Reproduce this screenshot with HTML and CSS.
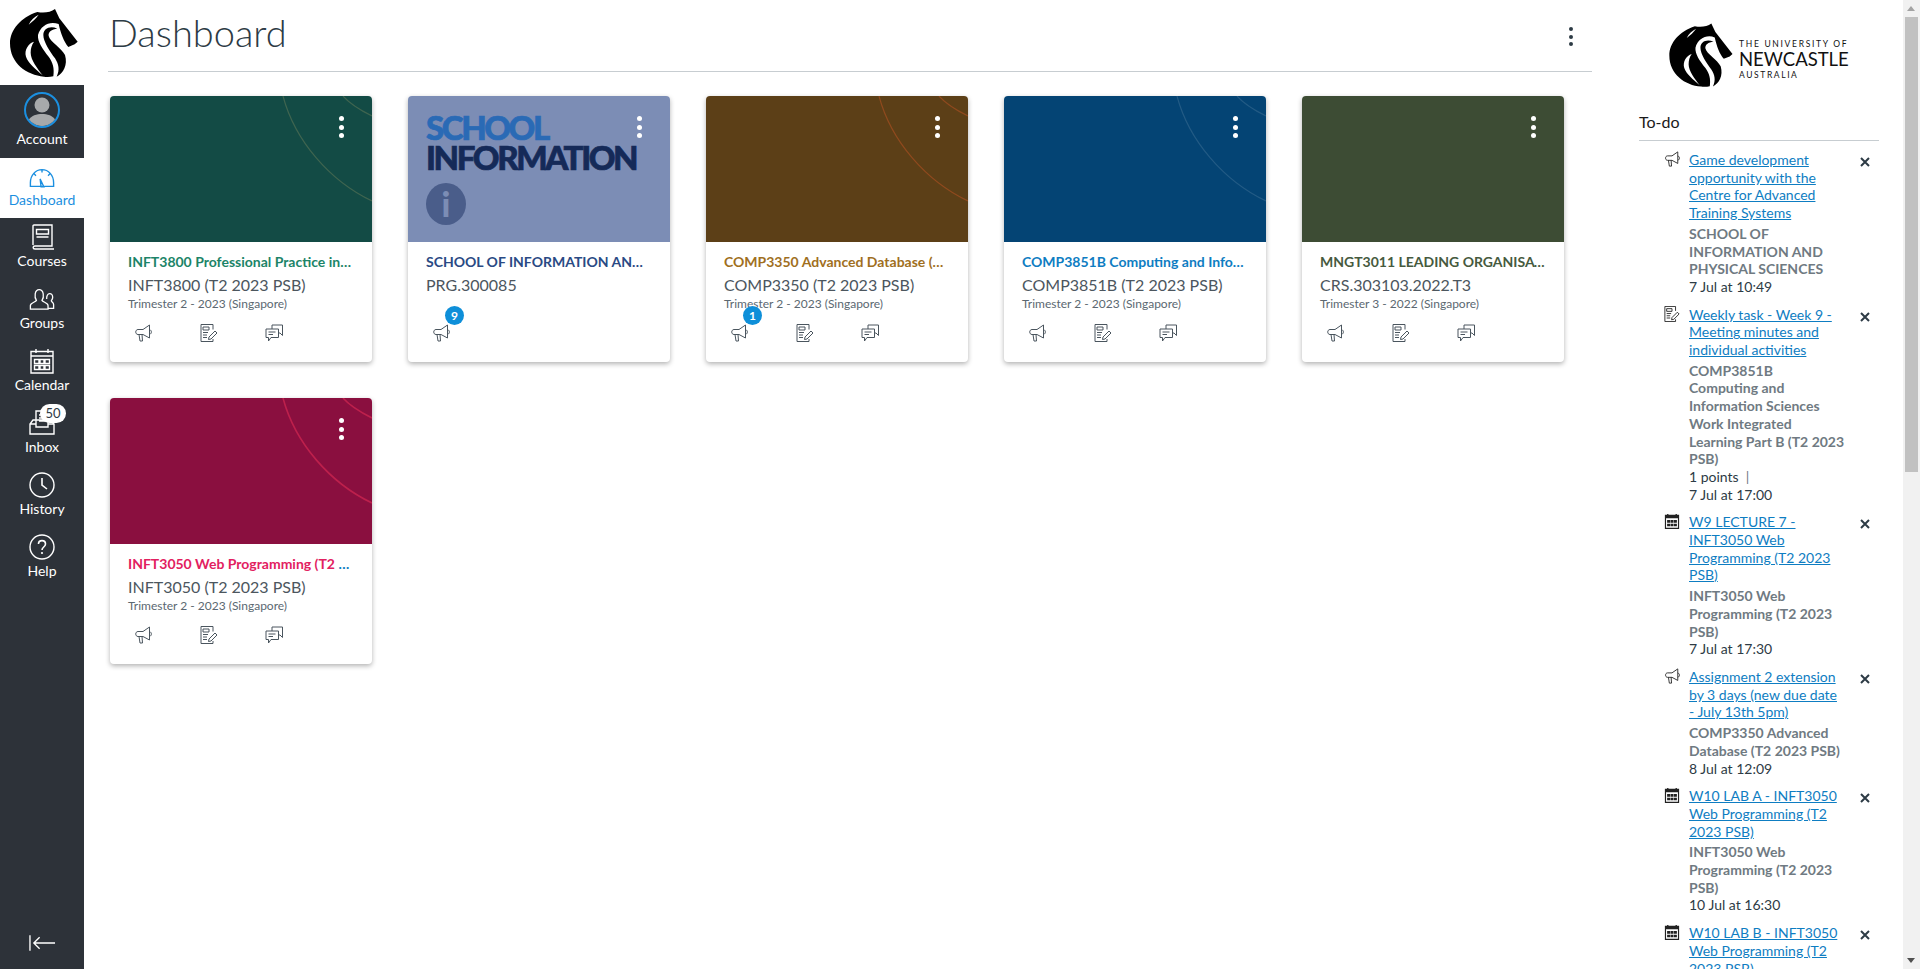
FILE: index.html
```html
<!DOCTYPE html>
<html lang="en">
<head>
<meta charset="utf-8">
<title>Dashboard</title>
<link rel="stylesheet" href="styles.css">
</head>
<body>
<svg class="defs" aria-hidden="true">
  <symbol id="horse" viewBox="0 0 270 270">
    <path fill="#000" d="M112 36C132 40 152 37 165 27L178 55L233 125L224 133L205 141C192 126 182 100 176 72C150 62 122 75 114 105C112 125 128 148 146 170C158 186 164 205 160 229C150 231 140 231 132 230C80 226 30 190 30 130C30 90 62 52 112 36Z"/>
    <path fill="#000" d="M172 86C150 76 130 86 130 105C130 125 150 155 165 175C176 192 180 210 170 230C190 220 204 195 195 165C185 145 150 125 146 108C144 95 155 88 172 86Z"/>
    <path fill="#fff" d="M116 44C104 50 92 60 86 74C98 64 108 56 116 44Z"/>
    <path fill="#fff" d="M102 125C85 130 72 150 78 170C85 190 105 205 128 226C112 205 92 180 92 158C92 145 95 135 102 125Z"/>
  </symbol>
  <symbol id="i-ann" viewBox="0 0 18 18">
    <path fill="none" stroke="currentColor" d="M4 5.500H9L15.500 1V14L9 10.500H4C1 10.500 1 5.500 4 5.500ZM5 10.500L6 17H8.500L8 10.500M15.500 5.500C18 6.500 18 9.500 15.500 10.500"/>
  </symbol>
  <symbol id="i-asg" viewBox="0 0 18 18">
    <path fill="none" stroke="currentColor" d="M13 5.500V.5H1V17.500H13V15M3 3H9V6H3ZM3 8.500H8M3 11H7M3 13.500H7M9 13L15 7L17 9L11 15L8.500 15.500Z"/>
  </symbol>
  <symbol id="i-dis" viewBox="0 0 18 18">
    <path fill="none" stroke="currentColor" d="M7 5V1H17.500V11.500L15 9H13.500M1 5H13.500V13.500H6L3.500 17V13.500H1ZM3.500 8H10.500M3.500 10.500H8"/>
  </symbol>
  <symbol id="i-cal" viewBox="0 0 18 18">
    <path fill="#222" d="M1 2H3.500V1H5V2H13V1H14.500V2H17V18H1ZM2.300 6V16.700H15.700V6ZM3.500 8H7V11H3.500ZM7.500 8H10.500V11H7.500ZM11 8H14.500V11H11ZM3.500 12H7V15H3.500ZM7.500 12H10.500V15H7.500ZM11 12H14.500V15H11Z" fill-rule="evenodd"/>
  </symbol>
  <symbol id="i-x" viewBox="0 0 10 10">
    <path fill="none" stroke="#2d3b45" stroke-width="2" d="M1 1L9 9M9 1L1 9"/>
  </symbol>
</svg>
<div class="app">
  <nav class="nav">
    <div class="nav-logo"><svg class="horse-nav"><use href="#horse"/></svg></div>
    <a class="nav-item nav-account">
      <span class="avatar">
        <svg viewBox="0 0 32 32"><circle cx="16" cy="11" r="7.500" fill="#a7a9ab"/><path d="M2 27C5 21 11 20 16 20C21 20 27 21 30 27C26 31 21 32 16 32C11 32 6 31 2 27Z" fill="#a7a9ab"/></svg>
      </span>
      <span>Account</span>
    </a>
    <a class="nav-item nav-active">
      <svg class="nav-ico" viewBox="0 0 28 26"><path fill="none" stroke="currentColor" stroke-width="1.500" d="M1.500 22H8.500M19.500 22H26.500V18C26.500 10 21 4 14 4C7 4 1.500 10 1.500 18V22ZM12 14L13 22.500H16L12 14ZM14 4V7M5.500 8.500L7.500 10.500M22.500 8.500L20.500 10.500"/></svg>
      <span>Dashboard</span>
    </a>
    <a class="nav-item">
      <svg class="nav-ico" viewBox="0 0 26 26"><path fill="none" stroke="currentColor" stroke-width="1.400" d="M4 21V2C4 1.500 4.500 1 5 1H23V22H6C3.500 22 3.500 25 6 25H25M7.500 5.500H19.500V10H7.500ZM7.500 13H19.500"/></svg>
      <span>Courses</span>
    </a>
    <a class="nav-item">
      <svg class="nav-ico" viewBox="0 0 28 26"><path fill="none" stroke="currentColor" stroke-width="1.400" d="M1.500 24V20C1.500 17 7 16.500 8 14.500C5.500 11 6 3 11 3C16 3 16.500 11 14 14.500C15 16.500 20.500 17 20.500 20V24ZM19 13C19 5 25.500 6 25.500 11C25.500 13 24.500 14 24 15C24 16 26.500 17 26.500 19V23H21"/></svg>
      <span>Groups</span>
    </a>
    <a class="nav-item">
      <svg class="nav-ico" viewBox="0 0 26 26"><path fill="none" stroke="currentColor" stroke-width="1.400" d="M2 3.500H24V25H2ZM2 8H24M7 1V5M19 1V5M5.500 11.500H10V15.500H5.500ZM11 11.500H15V15.500H11ZM16 11.500H20.500V15.500H16ZM5.500 17.500H10V21.500H5.500ZM11 17.500H15V21.500H11ZM16 17.500H20.500V21.500H16Z"/></svg>
      <span>Calendar</span>
    </a>
    <a class="nav-item nav-inbox">
      <svg class="nav-ico" viewBox="0 0 26 26"><path fill="none" stroke="currentColor" stroke-width="1.400" d="M7 14V1H19V14M10 5H16M10 8H16M10 11H16M4 10H7M19 10H22L25 14V24H1V14L4 10ZM1 14H7V17H19V14H25"/></svg>
      <span class="inbox-badge">50</span>
      <span>Inbox</span>
    </a>
    <a class="nav-item">
      <svg class="nav-ico" viewBox="0 0 26 26"><circle cx="13" cy="13" r="12" fill="none" stroke="currentColor" stroke-width="1.400"/><path fill="none" stroke="currentColor" stroke-width="1.600" d="M13 6V13L18 17"/></svg>
      <span>History</span>
    </a>
    <a class="nav-item">
      <svg class="nav-ico" viewBox="0 0 26 26"><circle cx="13" cy="13" r="12" fill="none" stroke="currentColor" stroke-width="1.400"/><path fill="none" stroke="currentColor" stroke-width="1.600" d="M9.500 10C9.500 5.500 16.500 5.500 16.500 10C16.500 13 13 13 13 16"/><circle cx="13" cy="19" r="1.100" fill="currentColor"/></svg>
      <span>Help</span>
    </a>
    <div class="nav-collapse">
      <svg viewBox="0 0 28 16"><path fill="none" stroke="#fff" stroke-width="1.400" d="M1 0V16M27 8H5M11 2L5 8L11 14"/></svg>
    </div>
  </nav>

  <main class="main">
    <header class="page-head">
      <h1>Dashboard</h1>
      <div class="kebab kebab-dark"><i></i><i></i><i></i></div>
    </header>
    <section class="cards">
      <article class="card">
        <div class="card-img c-green">
          <svg class="arcs arcs-gold" viewBox="0 0 262 146"><path d="M173 0C185 45 220 85 262 105M233 0C240 8 250 14 262 20"/></svg>
          <div class="kebab"><i></i><i></i><i></i></div>
        </div>
        <div class="card-body">
          <p class="card-title t-green">INFT3800 Professional Practice in Information Technology</p>
          <p class="card-code">INFT3800 (T2 2023 PSB)</p>
          <p class="card-term">Trimester 2 - 2023 (Singapore)</p>
          <div class="actions">
            <span class="act"><svg><use href="#i-ann"/></svg></span>
            <span class="act"><svg><use href="#i-asg"/></svg></span>
            <span class="act"><svg><use href="#i-dis"/></svg></span>
          </div>
        </div>
      </article>
      <article class="card">
        <div class="card-img c-school">
          <div class="school-art">
            <div class="school-1">SCHOOL</div>
            <div class="school-2">INFORMATION</div>
            <div class="school-i">i</div>
          </div>
          <div class="kebab"><i></i><i></i><i></i></div>
        </div>
        <div class="card-body">
          <p class="card-title t-navy">SCHOOL OF INFORMATION AND PHYSICAL SCIENCES</p>
          <p class="card-code">PRG.300085</p>
          <p class="card-term">&nbsp;</p>
          <div class="actions">
            <span class="act"><svg><use href="#i-ann"/></svg><b class="badge">9</b></span>
          </div>
        </div>
      </article>
      <article class="card">
        <div class="card-img c-brown">
          <svg class="arcs arcs-warm" viewBox="0 0 262 146"><path d="M173 0C185 45 220 85 262 105M233 0C240 8 250 14 262 20"/></svg>
          <div class="kebab"><i></i><i></i><i></i></div>
        </div>
        <div class="card-body">
          <p class="card-title t-brown">COMP3350 Advanced Database (T2 2023 PSB)</p>
          <p class="card-code">COMP3350 (T2 2023 PSB)</p>
          <p class="card-term">Trimester 2 - 2023 (Singapore)</p>
          <div class="actions">
            <span class="act"><svg><use href="#i-ann"/></svg><b class="badge">1</b></span>
            <span class="act"><svg><use href="#i-asg"/></svg></span>
            <span class="act"><svg><use href="#i-dis"/></svg></span>
          </div>
        </div>
      </article>
      <article class="card">
        <div class="card-img c-blue">
          <svg class="arcs" viewBox="0 0 262 146"><path d="M173 0C185 45 220 85 262 105M233 0C240 8 250 14 262 20"/></svg>
          <div class="kebab"><i></i><i></i><i></i></div>
        </div>
        <div class="card-body">
          <p class="card-title t-blue">COMP3851B Computing and Information Sciences</p>
          <p class="card-code">COMP3851B (T2 2023 PSB)</p>
          <p class="card-term">Trimester 2 - 2023 (Singapore)</p>
          <div class="actions">
            <span class="act"><svg><use href="#i-ann"/></svg></span>
            <span class="act"><svg><use href="#i-asg"/></svg></span>
            <span class="act"><svg><use href="#i-dis"/></svg></span>
          </div>
        </div>
      </article>
      <article class="card">
        <div class="card-img c-olive">
          <div class="kebab"><i></i><i></i><i></i></div>
        </div>
        <div class="card-body">
          <p class="card-title t-olive">MNGT3011 LEADING ORGANISATIONS</p>
          <p class="card-code">CRS.303103.2022.T3</p>
          <p class="card-term">Trimester 3 - 2022 (Singapore)</p>
          <div class="actions">
            <span class="act"><svg><use href="#i-ann"/></svg></span>
            <span class="act"><svg><use href="#i-asg"/></svg></span>
            <span class="act"><svg><use href="#i-dis"/></svg></span>
          </div>
        </div>
      </article>
      <article class="card">
        <div class="card-img c-crimson">
          <svg class="arcs arcs-red" viewBox="0 0 262 146"><path d="M173 0C185 45 220 85 262 105M233 0C240 8 250 14 262 20"/></svg>
          <div class="kebab"><i></i><i></i><i></i></div>
        </div>
        <div class="card-body">
          <p class="card-title t-dots"><span class="t-crimson">INFT3050 Web Programming (T2 2023 PSB)</span></p>
          <p class="card-code">INFT3050 (T2 2023 PSB)</p>
          <p class="card-term">Trimester 2 - 2023 (Singapore)</p>
          <div class="actions">
            <span class="act"><svg><use href="#i-ann"/></svg></span>
            <span class="act"><svg><use href="#i-asg"/></svg></span>
            <span class="act"><svg><use href="#i-dis"/></svg></span>
          </div>
        </div>
      </article>
    </section>
  </main>

  <aside class="side">
    <div class="uni">
      <svg class="horse-side"><use href="#horse"/></svg>
      <div class="uni-text">
        <div class="uni-1">THE UNIVERSITY OF</div>
        <div class="uni-2">NEWCASTLE</div>
        <div class="uni-3">AUSTRALIA</div>
      </div>
    </div>
    <h2 class="todo-head">To-do</h2>
    <ul class="todo">
      <li class="todo-item">
        <svg class="todo-ico"><use href="#i-ann"/></svg>
        <div class="todo-text">
          <a class="todo-link">Game development opportunity with the Centre for Advanced Training Systems</a>
          <div class="todo-ctx">SCHOOL OF INFORMATION AND PHYSICAL SCIENCES</div>
          <div class="todo-date">7 Jul at 10:49</div>
        </div>
        <svg class="todo-x"><use href="#i-x"/></svg>
      </li>
      <li class="todo-item">
        <svg class="todo-ico"><use href="#i-asg"/></svg>
        <div class="todo-text">
          <a class="todo-link">Weekly task - Week 9 - Meeting minutes and individual activities</a>
          <div class="todo-ctx">COMP3851B Computing and Information Sciences Work Integrated Learning Part B (T2 2023 PSB)</div>
          <div class="todo-date">1 points &nbsp;<span class="pipe">|</span></div>
          <div class="todo-date">7 Jul at 17:00</div>
        </div>
        <svg class="todo-x"><use href="#i-x"/></svg>
      </li>
      <li class="todo-item">
        <svg class="todo-ico"><use href="#i-cal"/></svg>
        <div class="todo-text">
          <a class="todo-link">W9 LECTURE 7 - INFT3050 Web Programming (T2 2023 PSB)</a>
          <div class="todo-ctx">INFT3050 Web Programming (T2 2023 PSB)</div>
          <div class="todo-date">7 Jul at 17:30</div>
        </div>
        <svg class="todo-x"><use href="#i-x"/></svg>
      </li>
      <li class="todo-item">
        <svg class="todo-ico"><use href="#i-ann"/></svg>
        <div class="todo-text">
          <a class="todo-link">Assignment 2 extension by 3 days (new due date - July 13th 5pm)</a>
          <div class="todo-ctx">COMP3350 Advanced Database (T2 2023 PSB)</div>
          <div class="todo-date">8 Jul at 12:09</div>
        </div>
        <svg class="todo-x"><use href="#i-x"/></svg>
      </li>
      <li class="todo-item">
        <svg class="todo-ico"><use href="#i-cal"/></svg>
        <div class="todo-text">
          <a class="todo-link">W10 LAB A - INFT3050 Web Programming (T2 2023 PSB)</a>
          <div class="todo-ctx">INFT3050 Web Programming (T2 2023 PSB)</div>
          <div class="todo-date">10 Jul at 16:30</div>
        </div>
        <svg class="todo-x"><use href="#i-x"/></svg>
      </li>
      <li class="todo-item">
        <svg class="todo-ico"><use href="#i-cal"/></svg>
        <div class="todo-text">
          <a class="todo-link">W10 LAB B - INFT3050 Web Programming (T2 2023 PSB)</a>
        </div>
        <svg class="todo-x"><use href="#i-x"/></svg>
      </li>
    </ul>
  </aside>

  <div class="scrollbar">
    <div class="sb-up"></div>
    <div class="sb-thumb"></div>
    <div class="sb-down"></div>
  </div>
</div>
</body>
</html>
```
FILE: styles.css
```css
* { box-sizing: border-box; }
html, body { margin: 0; height: 969px; overflow: hidden; background: #fff; }
body { font-family: Lato, "Open Sans", sans-serif; color: #2d3b45; }
.defs { display: none; }
p { margin: 0; }

.app { display: flex; height: 969px; overflow: hidden; }

/* Global nav */
.nav { width: 84px; flex: none; background: #2d3239; display: flex; flex-direction: column; color: #fff; }
.nav-logo { height: 85px; background: #fff; }
.horse-nav { display: block; width: 90px; height: 90px; }
.nav-item { position: relative; height: 62px; display: flex; flex-direction: column; align-items: center; justify-content: flex-start; padding-top: 6px; font-size: 14px; line-height: 18px; color: #fff; }
.nav-account { height: 73px; padding-top: 7px; gap: 2px; }
.nav-active { height: 60px; background: #fff; color: #1b8fe0; padding-top: 7px; }
.nav-ico { width: 26px; height: 26px; display: block; margin-bottom: 2px; }
.nav-active .nav-ico { margin-bottom: 0; }
.avatar { width: 36px; height: 36px; border-radius: 50%; border: 2px solid #1b8fe0; padding: 0; overflow: hidden; display: block; background: #2d3239; }
.avatar svg { display: block; width: 100%; height: 100%; }
.inbox-badge { position: absolute; top: 0; left: 40px; width: 26px; height: 19px; border-radius: 10px; background: #fff; color: #2d3b45; font-size: 13px; line-height: 19px; text-align: center; }
.nav-collapse { margin-top: auto; margin-bottom: 18px; padding-left: 29px; }
.nav-collapse svg { display: block; width: 27px; height: 16px; }

/* Main */
.main { width: 1484px; margin-left: 24px; flex: none; }
.page-head { height: 72px; border-bottom: 1px solid #c7cdd1; display: flex; justify-content: space-between; align-items: flex-start; padding: 0 19px 0 1px; }
.page-head h1 { margin: 10px 0 0; font-size: 38px; line-height: 44px; font-weight: 300; color: #2d3b45; }
.kebab { display: flex; flex-direction: column; gap: 3.500px; position: absolute; top: 20px; right: 28px; }
.kebab i { width: 5px; height: 5px; border-radius: 50%; background: #fff; display: block; }
.kebab-dark { position: static; margin-top: 27px; }
.kebab-dark i { background: #2d3b45; width: 4px; height: 4px; }

.cards { display: flex; flex-wrap: wrap; gap: 36px; padding: 24px 0 0 2px; }
.card { width: 262px; height: 266px; border-radius: 4px; background: #fff; box-shadow: 0 2px 5px rgba(0,0,0,.3); overflow: hidden; }
.card-img { position: relative; height: 146px; }
.c-green { background: #134b45; }
.c-school { background: #7c8db5; }
.c-brown { background: #5c3f17; }
.c-blue { background: #044474; }
.c-olive { background: #3d4c34; }
.c-crimson { background: #8a0f3f; }
.arcs { position: absolute; inset: 0; width: 100%; height: 100%; }
.arcs path { fill: none; stroke: rgba(255,255,255,.12); stroke-width: 1.200; }
.arcs-gold path { stroke: rgba(220,190,120,.22); }
.arcs-warm path { stroke: rgba(220,90,40,.4); }
.arcs-red path { stroke: rgba(240,50,90,.5); stroke-width: 1.600; }

.school-art { position: absolute; left: 18px; top: 16px; }
.school-1, .school-2 { font-weight: 900; font-size: 33px; line-height: 30px; letter-spacing: -2.400px; white-space: nowrap; -webkit-text-stroke: .7px currentColor; }
.school-1 { color: #2a6ab5; }
.school-2 { color: #152a58; }
.school-i { margin-top: 11px; width: 40px; height: 42px; border-radius: 50%; background: #4a5d8a; color: #7c8db5; text-align: center; font: 900 34px/42px Lato, sans-serif; }

.card-body { padding: 10px 18px 0; height: 120px; }
.card-title { font-size: 14px; line-height: 20px; font-weight: 700; white-space: nowrap; overflow: hidden; text-overflow: ellipsis; }
.t-green { color: #1c8468; }
.t-navy { color: #2a4a84; }
.t-brown { color: #a06f1e; }
.t-blue { color: #0e7dc2; }
.t-olive { color: #465a3e; }
.t-crimson { color: #e2215f; }
.t-dots { color: #0e7dc2; }
.card-code { margin-top: 2px; font-size: 16px; line-height: 22px; color: #4c565e; }
.card-term { font-size: 12px; line-height: 16px; color: #5b6871; }
.actions { display: flex; gap: 47.500px; margin-top: 12px; padding-left: 6px; color: #4a555e; }
.act { position: relative; width: 18px; height: 18px; display: block; }
.act svg { display: block; width: 18px; height: 18px; }
.badge { position: absolute; left: 13px; top: -18px; width: 19px; height: 19px; border-radius: 50%; background: #0e8fd9; color: #fff; font-size: 12px; font-weight: 700; line-height: 19px; text-align: center; }

/* Right side */
.side { width: 240px; margin-left: 47px; flex: none; }
.uni { display: flex; padding: 24px 0 0 30px; height: 105px; }
.horse-side { display: block; width: 84px; height: 84px; margin: -9px -14px 0 -9px; flex: none; overflow: hidden; }
.uni-text { margin-left: 9px; padding-top: 15px; color: #111; white-space: nowrap; }
.uni-1 { font-size: 8.500px; line-height: 11px; letter-spacing: 1.700px; }
.uni-2 { font-size: 18.500px; line-height: 19px; font-weight: 400; }
.uni-3 { font-size: 8.500px; line-height: 12px; letter-spacing: 1.600px; }
.todo-head { margin: 0; height: 36px; border-bottom: 1px solid #c7cdd1; font-size: 16px; line-height: 24px; font-weight: 400; padding-top: 5px; color: #1a1a1a; }
.todo { list-style: none; margin: 0; padding: 10px 0 0 25px; }
.todo-item { display: flex; margin-bottom: 10px; }
.todo-ico { width: 16px; height: 16px; flex: none; color: #222; display: block; }
.todo-text { width: 156px; margin-left: 9px; font-size: 14px; line-height: 17.700px; flex: none; }
.todo-link { color: #0e7dc2; text-decoration: underline; display: block; }
.todo-ctx { margin-top: 3px; color: #6f7a82; font-weight: 700; }
.todo-date { color: #2d3b45; }
.pipe { color: #6f7a82; }
.todo-x { width: 10px; height: 10px; margin: 6px 0 0 15px; flex: none; display: block; }

/* Scrollbar */
.scrollbar { position: absolute; top: 0; right: 0; width: 17px; height: 969px; background: #f1f1f1; }
.sb-thumb { position: absolute; top: 17px; left: 2px; width: 13px; height: 455px; background: #c1c1c1; }
.sb-up, .sb-down { position: absolute; left: 4px; width: 0; height: 0; border-left: 4px solid transparent; border-right: 4px solid transparent; }
.sb-up { top: 6px; border-bottom: 5px solid #a3a3a3; }
.sb-down { bottom: 6px; border-top: 5px solid #505050; }
```
